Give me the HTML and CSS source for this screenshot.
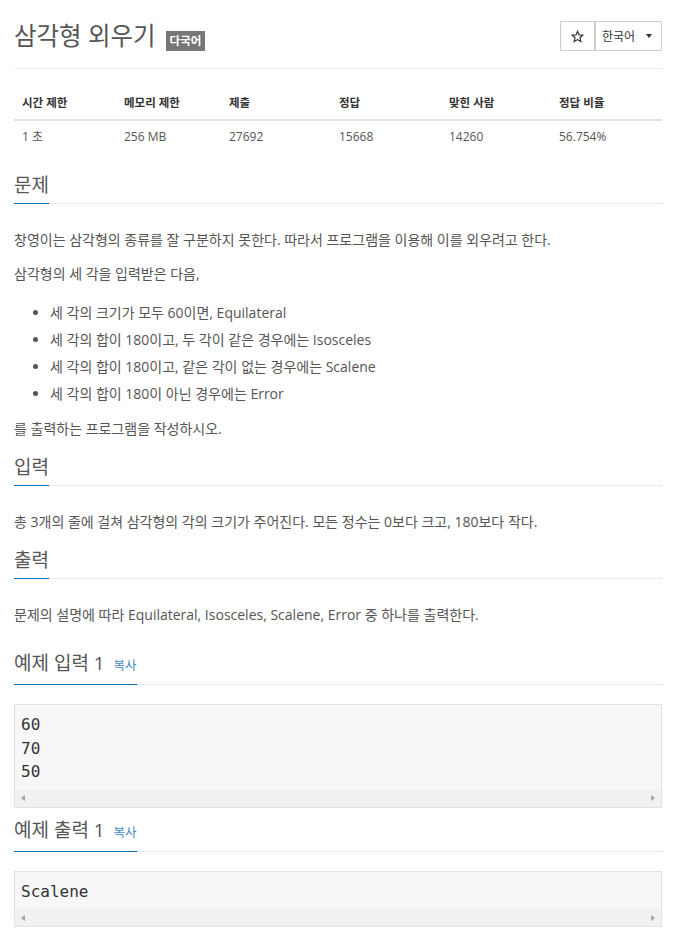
FILE: index.html
```html
<!DOCTYPE html>
<html lang="ko">
<head>
<meta charset="utf-8">
<title>삼각형 외우기</title>
<link rel="stylesheet" href="styles.css">
</head>
<body>
<div class="page">
  <div class="page-header">
    <h1 class="title"><span class="title-text">삼각형 외우기</span><span class="badge">다국어</span></h1>
    <div class="btns">
      <div class="btn star"><svg width="13" height="13" viewBox="0 0 24 24"><path d="M12 2.5l2.8 6.6 7.1.6-5.4 4.7 1.6 7-6.1-3.7-6.1 3.7 1.6-7-5.4-4.7 7.1-.6z" fill="none" stroke="#333" stroke-width="2.2" stroke-linejoin="miter"/></svg></div>
      <div class="btn lang">한국어<span class="caret"></span></div>
    </div>
  </div>

  <table class="info">
    <thead>
      <tr><th class="c1">시간 제한</th><th class="c2">메모리 제한</th><th class="c3">제출</th><th class="c4">정답</th><th class="c5">맞힌 사람</th><th class="c6">정답 비율</th></tr>
    </thead>
    <tbody>
      <tr><td>1 초</td><td>256 MB</td><td>27692</td><td>15668</td><td>14260</td><td>56.754%</td></tr>
    </tbody>
  </table>

  <section class="sec first">
    <div class="headline"><h2>문제</h2></div>
    <div class="text">
      <p>창영이는 삼각형의 종류를 잘 구분하지 못한다. 따라서 프로그램을 이용해 이를 외우려고 한다.</p>
      <p>삼각형의 세 각을 입력받은 다음,</p>
      <ul>
        <li>세 각의 크기가 모두 60이면, Equilateral</li>
        <li>세 각의 합이 180이고, 두 각이 같은 경우에는 Isosceles</li>
        <li>세 각의 합이 180이고, 같은 각이 없는 경우에는 Scalene</li>
        <li>세 각의 합이 180이 아닌 경우에는 Error</li>
      </ul>
      <p>를 출력하는 프로그램을 작성하시오.</p>
    </div>
  </section>

  <section class="sec">
    <div class="headline"><h2>입력</h2></div>
    <div class="text">
      <p>총 3개의 줄에 걸쳐 삼각형의 각의 크기가 주어진다. 모든 정수는 0보다 크고, 180보다 작다.</p>
    </div>
  </section>

  <section class="sec">
    <div class="headline"><h2>출력</h2></div>
    <div class="text">
      <p>문제의 설명에 따라 Equilateral, Isosceles, Scalene, Error 중 하나를 출력한다.</p>
    </div>
  </section>

  <section class="sec sample first-sample">
    <div class="headline"><h2>예제 입력 1 <span class="copy">복사</span></h2></div>
    <div class="pre-box">
      <pre>60
70
50</pre>
      <div class="scrollbar"><span class="arr left"></span><span class="arr right"></span></div>
    </div>
  </section>

  <section class="sec sample">
    <div class="headline"><h2>예제 출력 1 <span class="copy">복사</span></h2></div>
    <div class="pre-box">
      <pre>Scalene</pre>
      <div class="scrollbar"><span class="arr left"></span><span class="arr right"></span></div>
    </div>
  </section>
</div>
</body>
</html>
```

FILE: styles.css
```css
html, body {
  margin: 0;
  padding: 0;
  background: #fff;
}
body {
  font-family: "Open Sans", "Noto Sans CJK KR", sans-serif;
  color: #555;
  font-size: 14px;
}
.page {
  width: 648px;
  padding: 0 17px 20px 14px;
}
.page-header {
  display: flex;
  justify-content: space-between;
  align-items: flex-start;
  padding-top: 21px;
  padding-bottom: 17px;
  border-bottom: 1px solid #eee;
}
.title {
  margin: 0;
  display: flex;
  align-items: flex-start;
  font-weight: 400;
  font-size: 24.5px;
  line-height: 30px;
  color: #555;
}
.title-text {
  display: block;
}
.badge {
  display: block;
  margin-left: 10px;
  margin-top: 10px;
  background: #777;
  color: #fff;
  font-size: 11.5px;
  font-weight: 700;
  line-height: 20px;
  padding: 0 4px;
}
.btns {
  display: flex;
}
.btn {
  box-sizing: border-box;
  height: 30px;
  border: 1px solid #ccc;
  display: flex;
  align-items: center;
  justify-content: center;
  font-size: 12px;
  color: #333;
}
.star {
  width: 35px;
}
.star svg {
  display: block;
}
.lang {
  width: 67px;
  padding-left: 6px;
  justify-content: flex-start;
}
.caret {
  display: inline-block;
  width: 0;
  height: 0;
  margin-left: 11px;
  border-top: 4px solid #333;
  border-left: 3.5px solid transparent;
  border-right: 3.5px solid transparent;
}

.info {
  width: 648px;
  margin-top: 18px;
  border-collapse: collapse;
  font-size: 12px;
  color: #555;
}
.info th, .info td {
  text-align: left;
  padding: 8px;
  line-height: 16px;
}
.info th {
  color: #333;
  font-weight: 700;
  font-size: 11.5px;
  border-bottom: 2px solid #e2e2e2;
}
.c1 { width: 86px; }
.c2 { width: 89px; }
.c3 { width: 94px; }
.c4 { width: 94px; }
.c5 { width: 94px; }

.sec {
  margin-top: 12px;
}
.sec.first {
  margin-top: 18px;
}
.headline {
  display: flex;
  border-bottom: 1px dotted #ddd;
}
.headline h2 {
  margin: 0 0 -1px 0;
  font-size: 19px;
  font-weight: 400;
  line-height: 28px;
  padding-bottom: 4px;
  color: #555;
  border-bottom: 1px solid #0076c0;
}
.copy {
  font-size: 12.5px;
  color: #428bca;
  margin-left: 4px;
}
.text {
  padding-top: 24px;
}
.text p {
  margin: 0 0 10px 0;
  line-height: 24px;
}
.text p:last-child {
  margin-bottom: 0;
}
.text ul {
  margin: 13px 0 10px 0;
  padding-left: 36px;
}
.text li {
  line-height: 27px;
}

.sample {
  margin-top: 8px;
}
.first-sample {
  margin-top: 22px;
}
.pre-box {
  margin-top: 19px;
  border: 1px solid #e1e1e8;
  background: #f7f7f9;
}
.pre-box pre {
  margin: 0;
  padding: 8px 6px 6px 6px;
  font-family: "DejaVu Sans Mono", monospace;
  font-size: 16px;
  line-height: 23.5px;
  color: #333;
}
.scrollbar {
  height: 17px;
  background: #f1f1f1;
  display: flex;
  justify-content: space-between;
  align-items: center;
  padding: 0 6px;
}
.arr {
  width: 0;
  height: 0;
  border-top: 3.5px solid transparent;
  border-bottom: 3.5px solid transparent;
}
.arr.left {
  border-right: 4px solid #a3a3a3;
}
.arr.right {
  border-left: 4px solid #a3a3a3;
}
```
